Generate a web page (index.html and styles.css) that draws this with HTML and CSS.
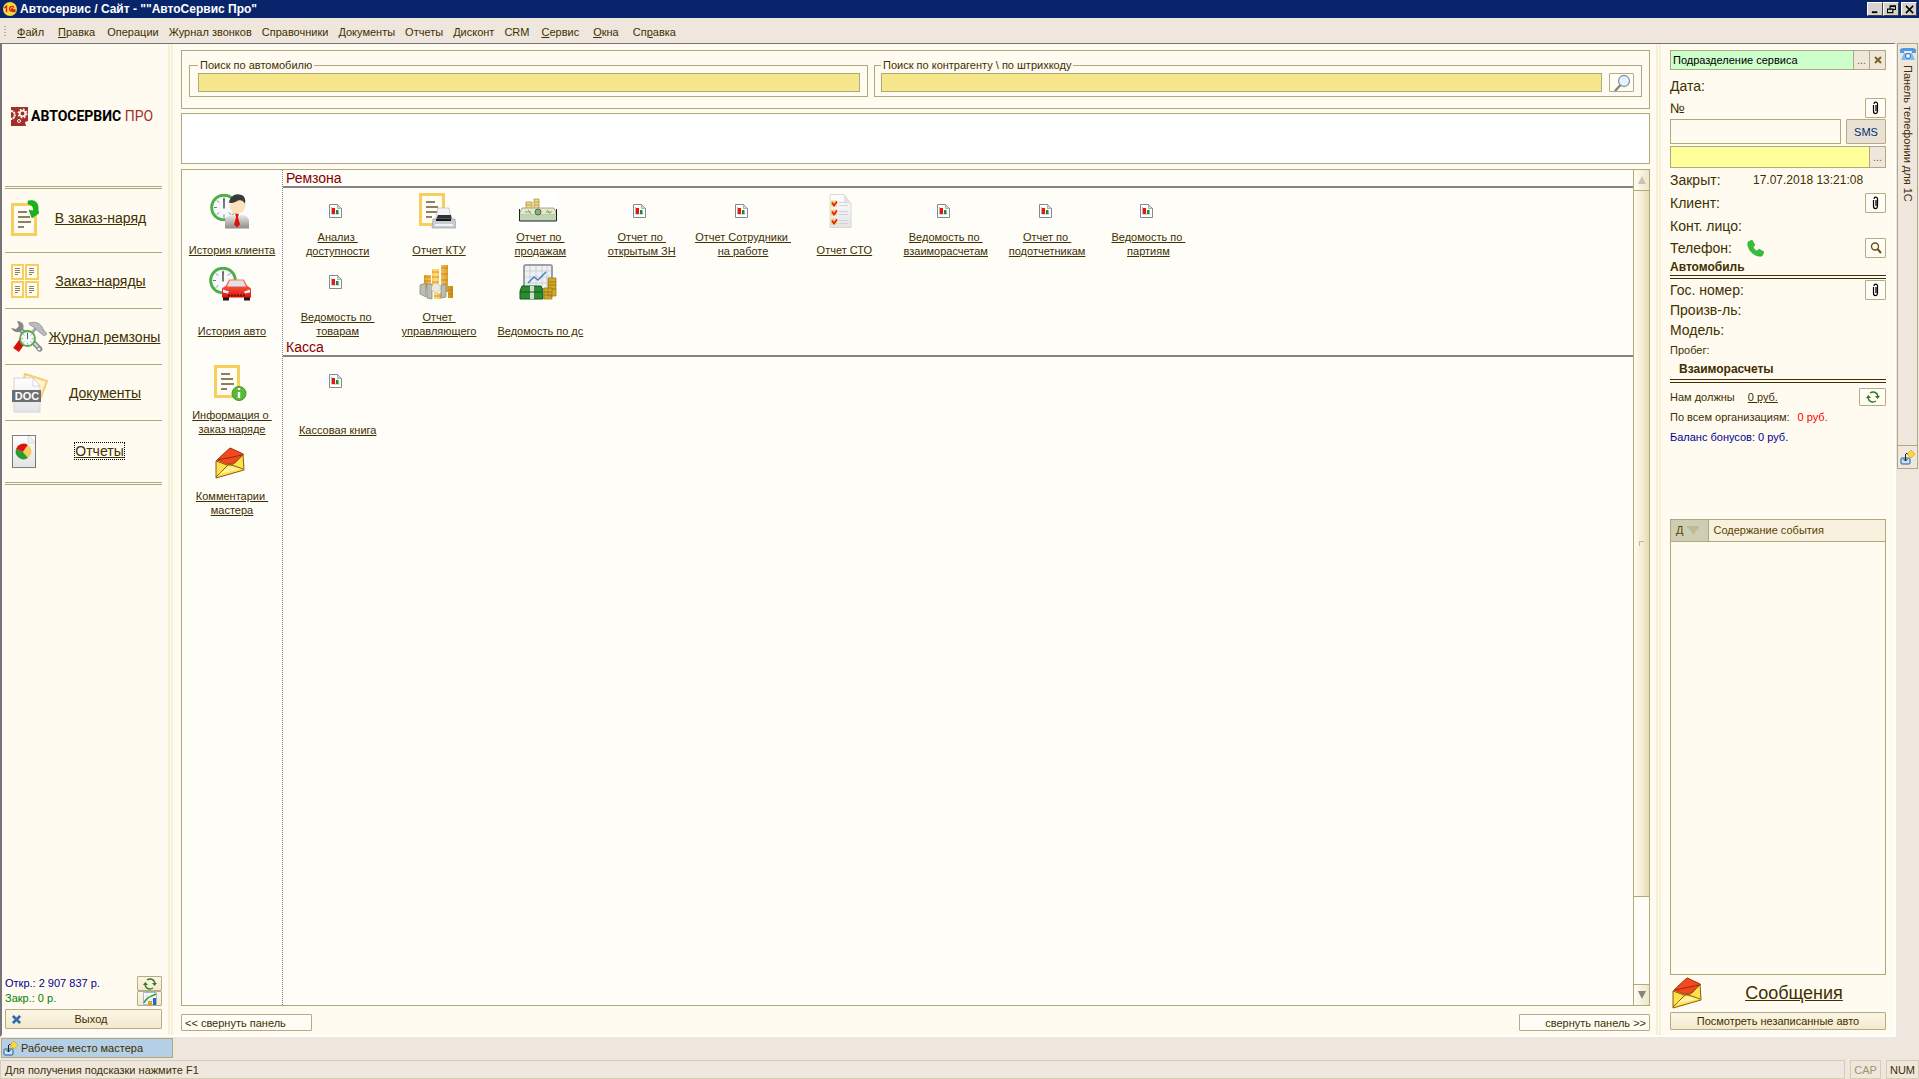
FILE: index.html
```
<!DOCTYPE html>
<html lang="ru">
<head>
  <meta charset="UTF-8">
  <meta name="viewport" content="width=device-width, initial-scale=1.0">
  <title>Автосервис / Сайт</title>
  <link rel="stylesheet" href="styles.css">
</head>
<body>
  <!-- Icon set -->
  <svg class="sprite" aria-hidden="true">
    <defs>
      <linearGradient id="gRed" x1="0" y1="0" x2="0" y2="1"><stop offset="0" stop-color="#ff7a5a"/><stop offset="1" stop-color="#e01208"/></linearGradient>
      <linearGradient id="gGold" x1="0" y1="0" x2="1" y2="0"><stop offset="0" stop-color="#e8a01c"/><stop offset=".4" stop-color="#ffdc78"/><stop offset="1" stop-color="#cf8510"/></linearGradient>
      <linearGradient id="gGrey" x1="0" y1="0" x2="0" y2="1"><stop offset="0" stop-color="#ececec"/><stop offset="1" stop-color="#8c8c8c"/></linearGradient>
      <linearGradient id="gPage" x1="0" y1="0" x2="0" y2="1"><stop offset="0" stop-color="#ffffff"/><stop offset="1" stop-color="#e2e4e6"/></linearGradient>
    </defs>
    <symbol id="i-clip" viewBox="0 0 26 33">
      <rect x="1.5" y="1.5" width="23" height="30" fill="#fffdf4" stroke="#f7cf5c" stroke-width="3"/>
      <path d="M7 9h9M7 14h12M7 19h13M7 24h6" stroke="#8d7f62" stroke-width="2"/>
    </symbol>
    <symbol id="i-clock" viewBox="0 0 28 28">
      <circle cx="14" cy="14" r="12.3" fill="#f7f8fa" stroke="#4fae4c" stroke-width="3"/>
      <path d="M14 4v3M14 21v3M4 14h3M21 14h3M7 7l2 2M21 7l-2 2M7 21l2-2M21 21l-2-2" stroke="#777"/>
      <path d="M14 5v10" stroke="#444" stroke-width="1.4"/>
    </symbol>
    <symbol id="i-toorder" viewBox="0 0 28 36">
      <use href="#i-clip" x="0" y="3" width="26" height="33"/>
      <path d="M17 1c7-2 11 2 10 9l1 3-7 5-3-8 4 1c1-4-1-6-5-7z" fill="#16b51a" stroke="#0d8a12" stroke-width=".5"/>
    </symbol>
    <symbol id="i-orders" viewBox="0 0 28 34">
      <g fill="#fffdf4" stroke="#f7cf5c" stroke-width="2"><path d="M1 1h11v14H1zM15 1h12v14H15zM1 18h11v15H1zM15 18h12v15H15z"/></g>
      <path d="M4 4.500h5M4 6.500h5M4 8.500h5M4 10.500h3M18 4.500h5M18 6.500h5M18 8.500h5M18 10.500h3M4 22.500h5M4 24.500h5M4 26.500h5M4 28.500h3M18 22.500h5M18 24.500h5M18 26.500h5M18 28.500h3" stroke="#8d7f62"/>
    </symbol>
    <symbol id="i-tools" viewBox="0 0 36 32">
      <path d="M9 8l20 20" stroke="#84888c" stroke-width="5" stroke-linecap="round"/>
      <path d="M9 8l18 18" stroke="#d4d6d8" stroke-width="2" stroke-linecap="round"/>
      <path d="M6 0c5 0 8 4 6 8s-8 5-12-1l5 1 3-3z" fill="#84888c"/>
      <path d="M26 6L14 20" stroke="#a5a8ab" stroke-width="3"/>
      <path d="M13 18L5 29" stroke="#d8100c" stroke-width="7"/>
      <path d="M18 2c6-2 12 0 14 6l4 5-3 2-6-5-3-3-5-3z" fill="#b9bcbf" stroke="#84888c" stroke-width=".7"/>
      <use href="#i-clock" x="8" y="9" width="17" height="17"/>
      <circle cx="28" cy="28" r="2" fill="#eee" stroke="#84888c"/>
    </symbol>
    <symbol id="i-pie" viewBox="0 0 26 34">
      <path d="M1 1h16l8 8v24H1z" fill="url(#gPage)"/>
      <path d="M17 1v8h8z" fill="#eef0f2" stroke="#cfd2d4" stroke-width=".7"/>
      <path d="M1.500 1.500h23v32h-23z" fill="none" stroke="#000" stroke-dasharray="1 1"/>
      <path d="M12 18L5 15a8 8 0 0 1 12-4z" fill="#dc1410"/>
      <path d="M12 18l5-7a8 8 0 0 1 0 13z" fill="#f3ce5c"/>
      <path d="M12 18l5 6A8 8 0 0 1 5 15z" fill="#2c9a2c"/>
    </symbol>
    <symbol id="i-client" viewBox="0 0 40 35">
      <use href="#i-clock" x="0" y="0" width="28" height="28"/>
      <path d="M15 35V27c0-4 5-6 12-6s12 2 12 6v8z" fill="url(#gGrey)"/>
      <path d="M23 20h8l-4 6z" fill="#fff"/>
      <path d="M25 20h4l-1 4 2 7-3 3-3-3 2-7z" fill="#e01208"/>
      <ellipse cx="27.500" cy="11.500" rx="8" ry="9" fill="#fde0bd"/>
      <path d="M19 9c1-6 6-9 10-8 5 0 7 4 6 9-2-3-4-4-7-3-3 2-6 3-9 2z" fill="#383a3c"/>
    </symbol>
    <symbol id="i-car" viewBox="0 0 42 35">
      <use href="#i-clock" x="0" y="0" width="28" height="28"/>
      <path d="M14 28h6v6h-6zM35 28h6v6h-6z" fill="#241414"/>
      <path d="M13 22l4-3 3-6h15l3 6 4 3v9H13z" fill="url(#gRed)"/>
      <path d="M21 14h13l3 6H18z" fill="#dfe4e8"/>
      <path d="M14 23l6 2-1 2-5-1zM41 23l-6 2 1 2 5-1z" fill="#d8f0ff"/>
      <path d="M19 29h17" stroke="#7c0a06" stroke-width="2" stroke-dasharray="2 1"/>
    </symbol>
    <symbol id="i-info" viewBox="0 0 33 36">
      <use href="#i-clip" x="0" y="0" width="26" height="33"/>
      <circle cx="25" cy="28.500" r="7" fill="#5cb83a" stroke="#3f9a22"/>
      <path d="M25 27v6M25 23v2" stroke="#fff" stroke-width="2.4"/>
    </symbol>
    <symbol id="i-mail" viewBox="0 0 30 32">
      <path d="M1 14L15 1l13 6 1 16-28 8z" fill="#ffe14c" stroke="#8a5a10"/>
      <path d="M2 13L15 1l13 6-8 9-8 1z" fill="#f24a20" stroke="#b52a10" stroke-width=".8"/>
      <path d="M3 13l24-5" stroke="#8a1c08" stroke-width=".8"/>
      <path d="M1 14l11 4h5l12-11M1 30l13-13 14 5" fill="none" stroke="#8a5a10"/>
      <path d="M4 27l10-8 12 3z" fill="#fff2a0"/>
    </symbol>
    <symbol id="i-report" viewBox="0 0 13 14">
      <path d="M.5.500h8l4 4v9H.5z" fill="#fff" stroke="#84888f"/>
      <path d="M8.500.5v4h4z" fill="#d8dce0" stroke="#84888f" stroke-width=".6"/>
      <path d="M2.500 3v7h8" fill="none" stroke="#8f959c" stroke-width=".7"/>
      <path d="M3 4h3v6H3z" fill="#e8160c"/><path d="M7 6h2.500v4H7z" fill="#12902a"/>
    </symbol>
    <symbol id="i-print" viewBox="0 0 37 36">
      <use href="#i-clip" x="0" y="0" width="26" height="33"/>
      <path d="M19 15h11l2 10H17z" fill="#f4f4f6" stroke="#b7b9be" stroke-width=".7"/>
      <path d="M19 22h13l1 5H17z" fill="#2e3035"/>
      <path d="M14 26h22l1 9H13z" fill="#c9cbd2" stroke="#9a9ca3" stroke-width=".7"/>
      <path d="M17 27h15" stroke="#17181c" stroke-width="2"/>
      <path d="M16 32h18" stroke="#f2f3f6" stroke-width="2"/>
    </symbol>
    <symbol id="i-money" viewBox="0 0 38 38">
      <path d="M0 0h38v38H0z" fill="#fff"/>
      <path d="M7 10h6v8H7zM15 7h5v11h-5z" fill="#ecd88a" stroke="#b3923a" stroke-width=".8"/>
      <path d="M7 13h6M15 10h5M15 13h5" stroke="#b3923a" stroke-width=".7"/>
      <path d="M3 16h32l3 7H0z" fill="#e6e8c8" stroke="#8c9c74" stroke-width=".8"/>
      <path d="M0 23h38v6H0z" fill="#c0d4b8"/>
      <path d="M.5 17v12h37V17" fill="none" stroke="#1c241c"/>
      <circle cx="19" cy="20" r="3" fill="#8fae88" stroke="#4c6c48"/>
      <path d="M6 20h6M27 20h6M9 18l3 4M28 18l3 4" stroke="#8ba07a"/>
    </symbol>
    <symbol id="i-check" viewBox="0 0 27 35">
      <path d="M1 1h14l7 9v24H1z" fill="url(#gPage)" stroke="#d6d8d6"/>
      <path d="M15 1v9h7z" fill="#dfe3df"/>
      <path d="M2 7h6v6H2zM2 16h6v6H2zM2 25h6v6H2z" fill="#f8d077"/>
      <path d="M3 9l2 3 3-4M3 18l2 3 3-4M3 27l2 3 3-4" fill="none" stroke="#e01c10" stroke-width="1.600"/>
      <path d="M10 9h5M10 12h9M10 18h9M10 21h9M10 27h9M10 30h9" stroke="#d0d2d4"/>
    </symbol>
    <symbol id="i-coins" viewBox="0 0 36 36">
      <path d="M5 11h7v14H5zM13 5h7v22h-7zM22 1h7v27h-7zM29 22h5v12h-5zM15 29h7v6h-7z" fill="url(#gGold)"/>
      <path d="M5 13h7M5 17h7M13 8h7M13 13h7M13 18h7M22 4h7M22 10h7M22 16h7M29 26h5M29 30h5M15 32h7" stroke="#bd780c" stroke-width=".7"/>
      <path d="M1 21l6-2v14l-6-3zM8 20h5v15l-5-1zM22 21l5-1v13l-5 1z" fill="#b9bfb2" stroke="#7c8475" stroke-width=".7"/>
      <circle cx="17" cy="24" r="4.500" fill="#eee9dc" stroke="#bdb6a2" stroke-width=".6"/>
    </symbol>
    <symbol id="i-cash" viewBox="0 0 38 36">
      <rect x="5" y="1" width="28" height="24" rx="2" fill="#eef1f4" stroke="#9aa0a6" stroke-width="2"/>
      <path d="M11 2v22M17 2v22M23 2v22M28 2v22M6 7h26M6 13h26M6 19h26" stroke="#c5ccd3" stroke-width=".8"/>
      <path d="M9 19l6-6 4 3 8-8" fill="none" stroke="#4d7fb8" stroke-width="1.500"/>
      <path d="M3 22h19l2 5v8H1v-8z" fill="#2c8a30" stroke="#14561a"/>
      <path d="M11 22h4v13h-4z" fill="#d2dfcb"/><path d="M1 28h22" stroke="#14561a"/>
      <path d="M29 14h8v18h-8zM25 24h8v11h-8z" fill="#d4a92a" stroke="#93700e" stroke-width=".7"/>
      <path d="M29 18h8M29 21h8M33 25h4M25 28h8M25 31h8" stroke="#93700e" stroke-width=".8"/>
    </symbol>
    <symbol id="i-clipper" viewBox="0 0 9 14">
      <path d="M2.500 4v6c0 3.500 4 3.500 4 0V3c0-2.500-3.500-2.500-3.500 0M5 4v6" fill="none" stroke="#000" stroke-width="1.200"/>
    </symbol>
    <symbol id="i-lens" viewBox="0 0 12 12">
      <circle cx="5" cy="4.500" r="3.500" fill="none" stroke="#6b5210" stroke-width="1.400"/>
      <path d="M7.500 7l3.500 4" stroke="#6b5210" stroke-width="2"/>
    </symbol>
    <symbol id="i-biglens" viewBox="0 0 18 18">
      <circle cx="11" cy="7" r="5.500" fill="#e4f3ff" stroke="#8e959d" stroke-width="1.300"/>
      <path d="M7.500 11L2 17" stroke="#7f858c" stroke-width="2.400"/>
    </symbol>
    <symbol id="i-refresh" viewBox="0 0 14 12">
      <path d="M4 2c3-2 7-1 8 3M10 10c-3 2-7 1-8-3" fill="none" stroke="#2f7a1e" stroke-width="1.400"/>
      <path d="M0 7h5L2.300 4zM9 5h5l-2.500 3z" fill="#2f7a1e"/>
    </symbol>
    <symbol id="i-chart" viewBox="0 0 14 13">
      <path d="M.5.500h13v12H.5z" fill="#fff" stroke="#aab8c8"/>
      <path d="M4 1v12M9 1v12M1 4h12M1 8h12" stroke="#c8d6e4" stroke-width=".6"/>
      <path d="M1 11C4 5 7 5 13 2" fill="none" stroke="#2f9a3a" stroke-width="1.500"/>
      <path d="M5 9h4v4H5z" fill="#dba722"/><path d="M10 6h3v7h-3z" fill="#2c62c0"/>
    </symbol>
    <symbol id="i-phone" viewBox="0 0 17 17">
      <path d="M1 2l4-2 3 5-2 2c1 2 2 3 4 4l2-2 5 3-2 4C8 18-1 9 1 2z" fill="#35bf3a" stroke="#229a2a" stroke-width=".5"/>
    </symbol>
    <symbol id="i-tel" viewBox="0 0 16 13">
      <path d="M0 1c5-2 11-2 16 0v4h-4V3H4v2H0z" fill="#4d9be0"/>
      <path d="M4 5h8l3 7H1z" fill="#7cbcf0"/><circle cx="8" cy="8" r="2.500" fill="#e8f4ff" stroke="#2d6fb8"/>
    </symbol>
    <symbol id="i-place" viewBox="0 0 16 15">
      <rect x="1" y="8" width="9" height="6" rx="1" fill="#c4e2fa" stroke="#245c94"/>
      <path d="M5.500 4v7M3.500 9l2 2 2-2M6 3.500h4" fill="none" stroke="#222"/>
      <path d="M11 0l4 4-4 4-4-4z" fill="#fbd63c" stroke="#c99a18" stroke-width=".6"/>
    </symbol>
    <symbol id="i-gears" viewBox="0 0 18 19">
      <path d="M0 0h17v14l-3 1 1 4H0z" fill="#a2302a"/>
      <circle cx="11.500" cy="6.500" r="4" fill="none" stroke="#fffbf0" stroke-width="2" stroke-dasharray="1.600 1.540"/>
      <circle cx="11.500" cy="6.500" r="2.800" fill="none" stroke="#fffbf0" stroke-width="1.600"/>
      <path d="M0 4c5 0 5 8 0 8" fill="none" stroke="#fffbf0" stroke-width="2" stroke-dasharray="2 .7"/>
      <circle cx="8" cy="14" r="1.500" fill="none" stroke="#fffbf0"/>
    </symbol>
    <symbol id="i-1c" viewBox="0 0 14 14">
      <circle cx="7" cy="7" r="7" fill="#fbd63c"/>
      <path d="M1.500 6L3.500 4v6M11 5.500c-1.500-2-4.500-1-4.500 1.500S9 9.500 12.500 9.500M10 7c-1.500-1-2 .8-.5 1h3" fill="none" stroke="#d8201a" stroke-width="1.300"/>
    </symbol>
  </svg>

  <!-- Title bar -->
  <header class="titlebar">
    <svg class="app-icon"><use href="#i-1c"/></svg>
    <h1>Автосервис / Сайт - ""АвтоСервис Про"</h1>
    <div class="window-buttons">
      <button aria-label="Свернуть"><svg viewBox="0 0 10 10"><path d="M1 8h6" stroke="#000" stroke-width="2"/></svg></button>
      <button aria-label="Восстановить"><svg viewBox="0 0 10 10"><path d="M3.500 4V1h6v4H7M3 1.500h7M.5 4.500h6v4h-6zM0 4.500h7" fill="none" stroke="#000" stroke-width="1.300"/></svg></button>
      <button class="close" aria-label="Закрыть"><svg viewBox="0 0 10 10"><path d="M1 1l8 8M9 1L1 9" stroke="#000" stroke-width="1.800"/></svg></button>
    </div>
  </header>

  <nav class="menubar">
    <button class="wide"><u>Ф</u>айл</button>
    <button class="wide"><u>П</u>равка</button>
    <button>Операции</button>
    <button>Журнал звонков</button>
    <button>Справочники</button>
    <button>Документы</button>
    <button>Отчеты</button>
    <button>Дисконт</button>
    <button>CRM</button>
    <button class="wide"><u>С</u>ервис</button>
    <button class="wide"><u>О</u>кна</button>
    <button class="wide">Сп<u>р</u>авка</button>
  </nav>

  <div class="desktop">
    <div class="workspace">
      <!-- Left navigation -->
      <aside class="sidebar">
        <div class="logo">
          <svg><use href="#i-gears"/></svg>
          <span>АВТОСЕРВИС <em>ПРО</em></span>
        </div>
        <nav class="side-nav">
          <a href="#"><svg width="28" height="36"><use href="#i-toorder"/></svg><span>В заказ-наряд</span></a>
          <a href="#"><svg width="28" height="34"><use href="#i-orders"/></svg><span>Заказ-наряды</span></a>
          <a href="#"><svg width="36" height="32"><use href="#i-tools"/></svg><span>Журнал ремзоны</span></a>
          <a href="#">
            <svg width="37" height="40" viewBox="0 0 37 40">
              <path d="M14 1l22 7-10 26-18-8z" fill="#fff4cf" stroke="#f3ce72" stroke-width="2"/>
              <path d="M3 5h19l7 8v26H3z" fill="url(#gPage)" stroke="#d2d5d8"/>
              <path d="M22 5v8h7z" fill="#fff" stroke="#c5c9cc" stroke-width=".7"/>
              <rect x="1" y="17" width="29" height="12" fill="#6d7073"/>
              <text x="16" y="27" text-anchor="middle" class="doc-text">DOC</text>
            </svg>
            <span>Документы</span>
          </a>
          <a href="#" class="current"><svg width="26" height="34"><use href="#i-pie"/></svg><span>Отчеты</span></a>
        </nav>
        <div class="totals">
          <div class="totals-text">
            <p class="navy">Откр.: 2 907 837 р.</p>
            <p class="green">Закр.: 0 р.</p>
          </div>
          <div class="totals-buttons">
            <button class="btn tan" aria-label="Обновить"><svg width="14" height="12"><use href="#i-refresh"/></svg></button>
            <button class="btn tan" aria-label="График"><svg width="14" height="13"><use href="#i-chart"/></svg></button>
          </div>
        </div>
        <button class="btn tan exit"><svg viewBox="0 0 10 10"><path d="M1 1l8 8M9 1L1 9" stroke="#2f6fb0" stroke-width="3"/></svg><span>Выход</span></button>
      </aside>

      <!-- Center -->
      <main class="center">
        <section class="search">
          <fieldset class="search-car">
            <legend><label for="carSearch">Поиск по автомобилю</label></legend>
            <input type="text" id="carSearch">
          </fieldset>
          <fieldset class="search-client">
            <legend><label for="clientSearch">Поиск по контрагенту \ по штрихкоду</label></legend>
            <input type="text" id="clientSearch">
            <button class="btn" aria-label="Найти"><svg width="18" height="18"><use href="#i-biglens"/></svg></button>
          </fieldset>
        </section>
        <section class="message-box"></section>
        <section class="reports">
          <div class="shortcuts">
            <a href="#" class="cell short"><svg width="40" height="36"><use href="#i-client"/></svg><span>История клиента</span></a>
            <a href="#" class="cell"><svg width="42" height="36"><use href="#i-car"/></svg><span>История авто</span></a>
            <a href="#" class="cell tall"><svg width="33" height="36"><use href="#i-info"/></svg><span>Информация о&nbsp;<br>заказ наряде</span></a>
            <a href="#" class="cell"><svg width="30" height="32"><use href="#i-mail"/></svg><span>Комментарии&nbsp;<br>мастера</span></a>
          </div>
          <div class="report-groups">
            <h2>Ремзона</h2>
            <div class="cells">
              <a href="#" class="cell short"><svg width="13" height="14"><use href="#i-report"/></svg><span>Анализ&nbsp;<br>доступности</span></a>
              <a href="#" class="cell short"><svg width="37" height="36"><use href="#i-print"/></svg><span>Отчет КТУ</span></a>
              <a href="#" class="cell short"><svg width="38" height="38"><use href="#i-money"/></svg><span>Отчет по&nbsp;<br>продажам</span></a>
              <a href="#" class="cell short"><svg width="13" height="14"><use href="#i-report"/></svg><span>Отчет по&nbsp;<br>открытым ЗН</span></a>
              <a href="#" class="cell short"><svg width="13" height="14"><use href="#i-report"/></svg><span>Отчет Сотрудники&nbsp;<br>на работе</span></a>
              <a href="#" class="cell short"><svg width="27" height="35"><use href="#i-check"/></svg><span>Отчет СТО</span></a>
              <a href="#" class="cell short"><svg width="13" height="14"><use href="#i-report"/></svg><span>Ведомость по&nbsp;<br>взаиморасчетам</span></a>
              <a href="#" class="cell short"><svg width="13" height="14"><use href="#i-report"/></svg><span>Отчет по&nbsp;<br>подотчетникам</span></a>
              <a href="#" class="cell short"><svg width="13" height="14"><use href="#i-report"/></svg><span>Ведомость по&nbsp;<br>партиям</span></a>
            </div>
            <div class="cells">
              <a href="#" class="cell"><svg width="13" height="14"><use href="#i-report"/></svg><span>Ведомость по&nbsp;<br>товарам</span></a>
              <a href="#" class="cell"><svg width="36" height="36"><use href="#i-coins"/></svg><span>Отчет&nbsp;<br>управляющего</span></a>
              <a href="#" class="cell"><svg width="38" height="36"><use href="#i-cash"/></svg><span>Ведомость по дс</span></a>
            </div>
            <h2>Касса</h2>
            <div class="cells">
              <a href="#" class="cell"><svg width="13" height="14"><use href="#i-report"/></svg><span>Кассовая книга</span></a>
            </div>
          </div>
          <div class="scrollbar">
            <button class="up" aria-label="Вверх"><svg viewBox="0 0 8 8"><path d="M4 0l4 8H0z" fill="#c9c4ae"/></svg></button>
            <div class="track"><div class="thumb"></div></div>
            <button aria-label="Вниз"><svg viewBox="0 0 8 8"><path d="M4 8L0 0h8z" fill="#84847c"/></svg></button>
          </div>
        </section>
        <div class="collapse-row">
          <button class="btn">&lt;&lt; свернуть панель</button>
          <button class="btn right">свернуть панель &gt;&gt;</button>
        </div>
      </main>

      <!-- Right card -->
      <aside class="card">
        <div class="field department">
          <input type="text" value="Подразделение сервиса" aria-label="Подразделение">
          <button aria-label="Выбрать">...</button>
          <button aria-label="Очистить"><svg viewBox="0 0 8 8"><path d="M1 1l6 6M7 1L1 7" stroke="#7a6420" stroke-width="2"/></svg></button>
        </div>
        <div class="line date">Дата:</div>
        <div class="line"><label for="orderNumber">№</label><button class="btn small" aria-label="Прикрепить"><svg width="9" height="14"><use href="#i-clipper"/></svg></button></div>
        <div class="number-row">
          <input type="text" id="orderNumber">
          <button class="btn sms">SMS</button>
        </div>
        <div class="field status">
          <input type="text" aria-label="Статус">
          <button aria-label="Выбрать статус">...</button>
        </div>
        <div class="line roomy"><span class="name">Закрыт:</span><span class="time">17.07.2018 13:21:08</span></div>
        <div class="line roomy">Клиент:<button class="btn small" aria-label="Карточка клиента"><svg width="9" height="14"><use href="#i-clipper"/></svg></button></div>
        <div class="line roomy">Конт. лицо:</div>
        <div class="line phone"><span class="phone-name">Телефон:</span><svg width="17" height="17"><use href="#i-phone"/></svg><button class="btn small" aria-label="Найти телефон"><svg width="12" height="12"><use href="#i-lens"/></svg></button></div>
        <h3>Автомобиль</h3>
        <div class="line">Гос. номер:<button class="btn small" aria-label="Карточка авто"><svg width="9" height="14"><use href="#i-clipper"/></svg></button></div>
        <div class="line">Произв-ль:</div>
        <div class="line">Модель:</div>
        <div class="line minor">Пробег:</div>
        <h3 class="indent">Взаиморасчеты</h3>
        <div class="line minor"><span>Нам должны</span><a href="#">0 руб.</a><button class="btn small refresh" aria-label="Пересчитать"><svg width="14" height="12"><use href="#i-refresh"/></svg></button></div>
        <div class="line minor"><span>По всем организациям:</span><span class="red">0 руб.</span></div>
        <div class="line minor navy">Баланс бонусов: 0 руб.</div>
        <div class="events">
          <table>
            <thead>
              <tr>
                <th class="sort">Д <svg width="12" height="8" viewBox="0 0 12 8"><path d="M0 1h12M2 3h9M4 5h5M5 7h3" stroke="#b3a470"/></svg></th>
                <th>Содержание события</th>
              </tr>
            </thead>
          </table>
        </div>
        <div class="messages">
          <svg width="30" height="32"><use href="#i-mail"/></svg>
          <a href="#">Сообщения</a>
        </div>
        <button class="btn tan view">Посмотреть незаписанные авто</button>
      </aside>
    </div>

    <!-- Docked panels -->
    <div class="dock">
      <button class="dock-tab phone-tab"><svg width="16" height="13"><use href="#i-tel"/></svg><span>Панель телефонии для 1С</span></button>
      <button class="dock-tab" aria-label="Рабочее место"><svg width="16" height="15"><use href="#i-place"/></svg></button>
    </div>
  </div>

  <div class="taskbar">
    <button><svg width="16" height="15"><use href="#i-place"/></svg>Рабочее место мастера</button>
  </div>
  <footer class="statusbar">
    <span class="hint">Для получения подсказки нажмите F1</span>
    <span class="off">CAP</span>
    <span>NUM</span>
  </footer>
</body>
</html>
```

FILE: styles.css
```
* {
  box-sizing: border-box;
}

body {
  margin: 0;
  height: 100vh;
  display: flex;
  flex-direction: column;
  overflow: hidden;
  font-family: "Liberation Sans", Arial, sans-serif;
  font-size: 11px;
  line-height: 14px;
  color: #402f00;
  background-color: #efe7de;
}

button, input {
  font: inherit;
  color: inherit;
  margin: 0;
  padding: 0;
  border-radius: 0;
}

a {
  color: inherit;
}

p, h1, h2, h3 {
  margin: 0;
}

svg {
  flex: none;
}

.sprite {
  position: absolute;
  width: 0;
  height: 0;
}

.navy { color: #000090; }
.green { color: #008000; }
.red { color: #ff0000; }

/* Title bar */
.titlebar {
  display: flex;
  align-items: center;
  height: 18px;
  padding: 0 2px 0 3px;
  background-color: #08246b;
  color: #fff;
}

.app-icon {
  width: 14px;
  height: 14px;
  margin-right: 3px;
}

.titlebar h1 {
  flex: 1;
  font-size: 12px;
}

.window-buttons {
  display: flex;
}

.window-buttons button {
  width: 16px;
  height: 14px;
  display: flex;
  align-items: center;
  justify-content: center;
  border: 1px solid;
  border-color: #fff #404040 #404040 #fff;
  background-color: #d6d3ce;
}

.window-buttons .close {
  margin-left: 2px;
}

.window-buttons svg {
  width: 9px;
  height: 9px;
}

/* Menu */
.menubar {
  display: flex;
  align-items: center;
  height: 25px;
  padding: 2px 0 0 4px;
}

.menubar::before {
  content: "";
  width: 2px;
  height: 12px;
  margin-right: 4px;
  background: repeating-linear-gradient(#b5a98c 0 1px, #efe7de 1px 3px);
}

.menubar button {
  border: none;
  padding: 0 5px;
  background: none;
}

.menubar .wide {
  padding: 0 7px;
}

/* Desktop */
.desktop {
  flex: 1;
  display: flex;
  min-height: 0;
}

.workspace {
  flex: 1;
  display: flex;
  border: 2px solid;
  border-top-width: 1px;
  border-color: #77747a #fff #fff #77747a;
  background-color: #fffbf0;
}

/* Sidebar */
.sidebar {
  width: 171px;
  display: flex;
  flex-direction: column;
  padding: 0 6px 6px 3px;
  border-right: 5px double #f6f1d6;
}

.logo {
  height: 142px;
  display: flex;
  align-items: center;
  gap: 2px;
  padding: 2px 0 0 6px;
  font-family: Roboto, "Liberation Sans", sans-serif;
  font-size: 14px;
  font-weight: bold;
  line-height: 20px;
  color: #000;
  white-space: nowrap;
}

.logo svg {
  width: 18px;
  height: 19px;
}

.logo em {
  font-style: normal;
  font-weight: normal;
  color: #a2302a;
}

.side-nav {
  border-top: 3px double #b0a97c;
  border-bottom: 3px double #b0a97c;
}

.side-nav a {
  height: 56px;
  display: flex;
  align-items: center;
  padding-left: 6px;
  font-size: 14px;
  line-height: 16px;
  border-bottom: 1px solid #b0a97c;
}

.side-nav a:first-child {
  height: 64px;
  padding-bottom: 6px;
}

.side-nav a:last-child {
  height: 61px;
  padding-bottom: 2px;
  border-bottom: none;
}

.side-nav span {
  flex: 1;
  text-align: center;
  white-space: nowrap;
}

.side-nav .current span {
  flex: none;
  margin: 0 auto;
  outline: 1px dotted #000;
}

.doc-text {
  font-size: 11px;
  font-weight: bold;
  fill: #fff;
}

.totals {
  display: flex;
  justify-content: space-between;
  margin-top: auto;
}

.totals-text p {
  line-height: 15px;
}

.totals-buttons {
  display: flex;
  flex-direction: column;
}

.totals-buttons .btn {
  width: 25px;
  height: 15px;
}

.btn {
  display: flex;
  align-items: center;
  justify-content: center;
  border: 1px solid #b3ac86;
  border-radius: 1px;
  background: linear-gradient(#fffefa, #fffbf0);
}

.btn.tan {
  background: linear-gradient(#fbf6e4, #f3e9cf);
}

.exit {
  height: 20px;
  margin-top: 3px;
  padding-left: 6px;
}

.exit svg {
  width: 9px;
  height: 9px;
}

.exit span {
  flex: 1;
}

/* Center */
.center {
  flex: 1;
  display: flex;
  flex-direction: column;
  min-width: 0;
  padding: 6px 6px 4px 8px;
}

.search {
  display: flex;
  gap: 6px;
  height: 59px;
  padding: 7px 7px 11px;
  border: 1px solid #b0a97c;
}

.search fieldset {
  display: flex;
  gap: 7px;
  min-width: 0;
  margin: 0;
  padding: 1px 7px 3px 8px;
  border: 1px solid #b0a97c;
}

.search-car {
  flex: 677;
}

.search-client {
  flex: 770;
}

.search .search-client {
  padding-left: 6px;
}

.search legend {
  padding: 0 2px;
}

.search input {
  flex: 1;
  height: 19px;
  border: 1px solid #b0a97c;
  background-color: #f7e78c;
}

.search .btn {
  width: 25px;
  height: 19px;
}

.message-box {
  height: 51px;
  margin: 4px 0 5px;
  border: 1px solid #b0a97c;
  background-color: #fff;
}

.reports {
  flex: 1;
  display: flex;
  min-height: 0;
  border: 1px solid #b0a97c;
  background-color: #fffdf8;
}

.shortcuts {
  width: 101px;
  padding-top: 18px;
  border-right: 1px dotted #848084;
}

.report-groups {
  flex: 1;
}

.report-groups h2 {
  height: 18px;
  padding-left: 3px;
  border-bottom: 2px solid #848284;
  font-size: 14px;
  font-weight: normal;
  line-height: 16px;
  color: #840000;
}

.cells {
  display: flex;
  padding-left: 4px;
}

.cell {
  display: flex;
  flex-direction: column;
  align-items: center;
  justify-content: space-between;
  width: 7.53%;
  height: 81px;
  padding-bottom: 1px;
  text-align: center;
  white-space: nowrap;
}

.shortcuts .cell {
  width: 100px;
}

.cell.short {
  height: 70px;
}

.cell.tall {
  height: 98px;
  padding-top: 18px;
}

.cell svg {
  height: 38px;
  margin: 5px 4px 0 0;
}

.cell.short svg {
  margin-top: 4px;
}

.shortcuts .cell + .cell svg {
  margin-top: 7px;
}

/* Scrollbar */
.scrollbar {
  width: 16px;
  display: flex;
  flex-direction: column;
  border-left: 1px solid #b0a97c;
}

.scrollbar button {
  height: 21px;
  display: flex;
  align-items: center;
  justify-content: center;
  border: 0;
  border-top: 1px solid #b0a97c;
  background: linear-gradient(90deg, #fffdf4, #efe6c8);
}

.scrollbar .up {
  border-top: 0;
  border-bottom: 1px solid #b0a97c;
}

.scrollbar svg {
  width: 8px;
  height: 8px;
}

.track {
  flex: 1;
}

.thumb {
  display: flex;
  align-items: center;
  justify-content: center;
  height: 89%;
  border-bottom: 1px solid #b0a97c;
  background: linear-gradient(90deg, #fffdf2, #f4ebcd 60%, #e6dab0);
}

.thumb::after {
  content: "";
  width: 4px;
  height: 4px;
  border-top: 1px solid #c2b896;
  border-left: 1px solid #c2b896;
}

.collapse-row {
  display: flex;
  justify-content: space-between;
  margin-top: 8px;
}

.collapse-row .btn {
  width: 131px;
  height: 17px;
  padding: 0 3px;
  justify-content: flex-start;
}

.collapse-row .right {
  justify-content: flex-end;
}

/* Right card */
.card {
  width: 238px;
  display: flex;
  flex-direction: column;
  padding: 6px 8px 5px 9px;
  border-left: 5px double #f6f1d6;
}

.field {
  display: flex;
  border: 1px solid #b0a97c;
}

.field input {
  flex: 1;
  min-width: 0;
  padding: 0 2px;
  border: none;
  color: #000;
}

.field button {
  width: 16px;
  border: none;
  border-left: 1px solid #b0a97c;
  background-color: #efe7de;
  color: #7a6420;
}

.field svg {
  width: 8px;
  height: 8px;
}

.department {
  height: 20px;
}

.department input {
  background-color: #ccffcc;
  font-size: 11px;
}

.line {
  display: flex;
  align-items: center;
  height: 20px;
  font-size: 14px;
}

.line.date {
  height: 28px;
  padding-top: 4px;
}

.line.roomy {
  height: 23px;
}

.line.phone {
  margin-top: 1px;
}

.line.minor {
  font-size: 11px;
}

.line .btn {
  margin-left: auto;
}

.btn.small {
  width: 21px;
  height: 20px;
}

.btn.refresh {
  width: 27px;
  height: 18px;
}

.number-row {
  display: flex;
  gap: 5px;
  height: 25px;
  margin: 1px 0 2px;
}

.number-row input {
  flex: 1;
  min-width: 0;
  border: 1px solid #b0a97c;
  background-color: #fffbf0;
}

.btn.sms {
  width: 40px;
  font-size: 11px;
  color: #003070;
  background: #e9e2d4;
}

.status {
  height: 22px;
}

.status input {
  background-color: #ffff99;
}

.name {
  width: 83px;
}

.time {
  font-size: 12px;
}

.phone-name {
  width: 77px;
}

.minor span:first-child {
  margin-right: 8px;
}

.minor a {
  margin-left: 5px;
}

.card h3 {
  height: 21px;
  margin-bottom: 1px;
  border-bottom: 4px double #402f00;
  font-size: 12px;
  line-height: 18px;
}

.card h3.indent {
  height: 23px;
  margin-bottom: 4px;
  padding-left: 9px;
}

.events {
  flex: 1;
  margin: 72px 0 2px;
  border: 1px solid #b0a97c;
}

.events table {
  width: 100%;
  border-collapse: collapse;
}

.events th {
  height: 21px;
  padding: 0 5px;
  border-bottom: 1px solid #b0a97c;
  background-color: #f7f1de;
  font-weight: normal;
  text-align: left;
  color: #5c4200;
}

.events .sort {
  width: 37px;
  border-right: 1px solid #b0a97c;
  background-color: #ceceb5;
  white-space: nowrap;
}

.messages {
  display: flex;
  align-items: center;
  padding-left: 2px;
}

.messages a {
  flex: 1;
  font-size: 18px;
  line-height: 20px;
  text-align: center;
}

.view {
  height: 18px;
  margin-top: 3px;
}

/* Dock */
.dock {
  width: 23px;
  padding: 0 1px;
}

.dock-tab {
  width: 21px;
  height: 23px;
  display: flex;
  flex-direction: column;
  align-items: center;
  justify-content: center;
  border: 1px solid #b0a97c;
  border-top: 0;
  background-color: #efe7de;
}

.phone-tab {
  height: 403px;
  justify-content: flex-start;
  gap: 4px;
  padding-top: 4px;
  border-top: 1px solid #b0a97c;
}

.phone-tab span {
  writing-mode: vertical-rl;
}

/* Taskbar and status */
.taskbar {
  height: 23px;
  padding: 1px;
}

.taskbar button {
  display: flex;
  align-items: center;
  gap: 2px;
  width: 172px;
  height: 20px;
  padding-left: 1px;
  border: 1px solid #b0a97c;
  background-color: #b5cfe7;
}

.statusbar {
  display: flex;
  gap: 5px;
  height: 19px;
  line-height: 18px;
}

.statusbar span {
  padding: 0 3px;
  border: 1px solid #d6cdb4;
}

.statusbar .hint {
  flex: 1;
  padding-left: 4px;
}

.statusbar .off {
  color: #a09468;
}
```
